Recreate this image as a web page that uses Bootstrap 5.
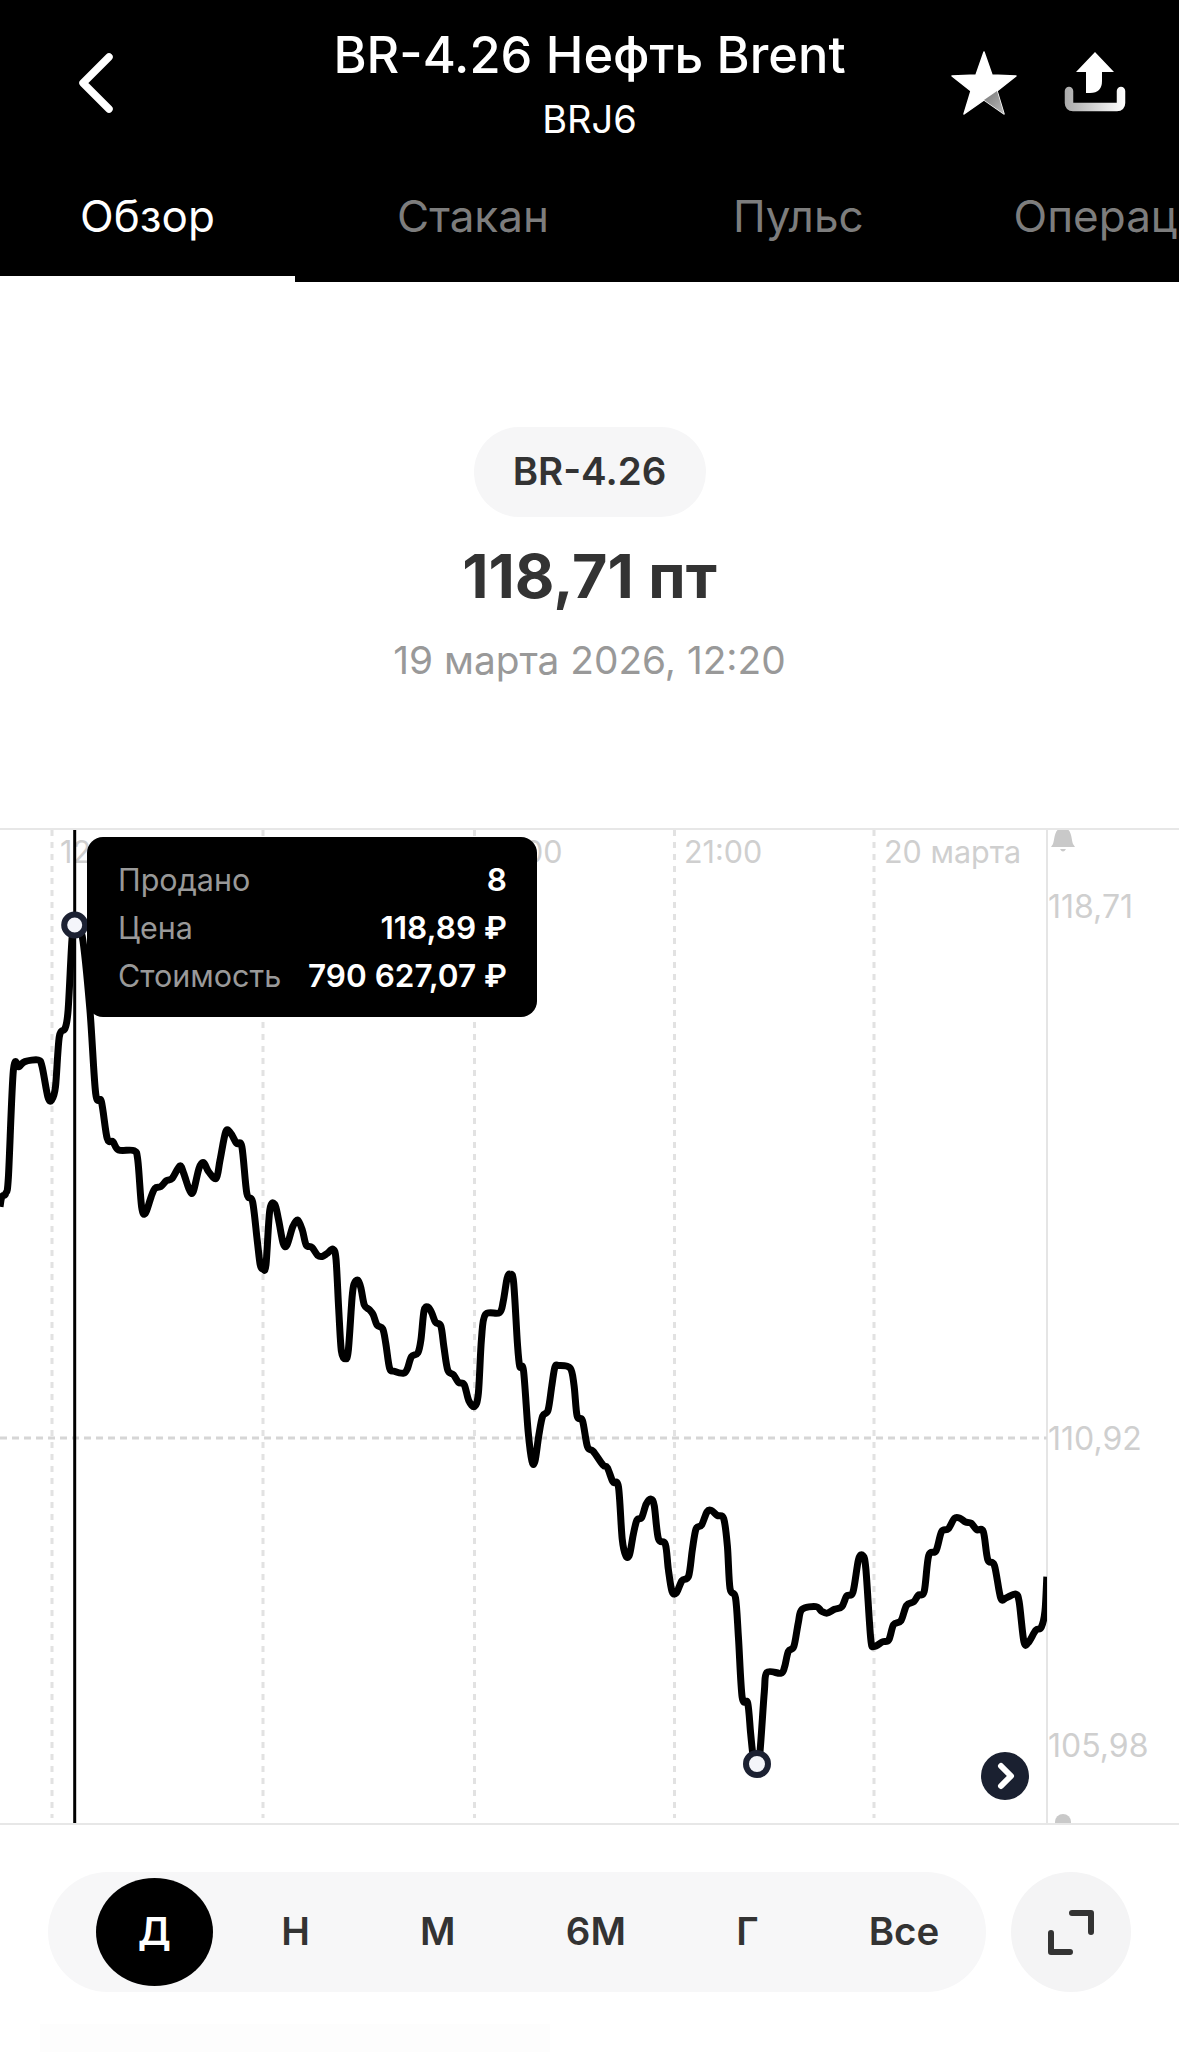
<!DOCTYPE html>
<html lang="ru">
<head>
    <meta charset="UTF-8">
    <meta name="viewport" content="width=device-width, initial-scale=1.0">
    <title>BR-4.26 Нефть Brent</title>
    <link href="https://cdn.jsdelivr.net/npm/bootstrap@5.3.0/dist/css/bootstrap.min.css" rel="stylesheet">
    <style>
        body { font-family: Inter, "Liberation Sans", sans-serif; background: #fff; width: 1179px; height: 2052px; overflow: hidden; }
        .top-head { background: #000; height: 282px; color: #fff; position: relative; overflow: hidden; }
        .head-row { height: 190px; padding-top: 26px; }
        .back-ico { position: absolute; left: 72px; top: 48px; }
        .star-ico { position: absolute; left: 945px; top: 45px; }
        .share-ico { position: absolute; left: 1060px; top: 45px; }
        .head-title { font-size: 50.5px; font-weight: 500; line-height: 58px; }
        .head-sub { font-size: 38px; line-height: 46px; margin-top: 12px; }
        .tabs-row { flex-wrap: nowrap; font-size: 44px; line-height: 52px; white-space: nowrap; height: 54px; }
        .tab-item { color: #7d7d7d; flex-shrink: 0; }
        .tab-item.active-tab { color: #fff; width: 295px; text-align: center; }
        .tab-two { margin-left: 102px; }
        .tab-three { margin-left: 184px; }
        .tab-four { margin-left: 150px; }
        .tab-bar { position: absolute; left: 0; bottom: 0; width: 295px; height: 6px; background: #fff; }
        .summary { height: 546px; padding-top: 145px; }
        .ticker-pill { background: #f6f6f7; color: #333; font-size: 38.5px; font-weight: 600; height: 90px; width: 232px; }
        .price-big { font-size: 61px; font-weight: 700; color: #333; line-height: 74px; margin-top: 22px; }
        .date-line { font-size: 38.8px; color: #999; line-height: 44px; margin-top: 25px; }
        .chart-box { height: 997px; border-top: 2px solid #e7e7e7; border-bottom: 2px solid #e7e7e7; position: relative; overflow: hidden; }
        .chart-box svg { position: absolute; left: 0; top: -2px; }
        .axis-txt { font-family: Inter, "Liberation Sans", sans-serif; font-size: 30.5px; fill: #cfcfcf; }
        .axis-val { font-size: 32px; }
        .deal-tip { position: absolute; left: 87px; top: 7px; width: 450px; height: 180px; background: #000; border-radius: 16px; padding: 19px 30px 0 31px; font-size: 30.5px; line-height: 48px; color: #999; }
        .deal-tip b { color: #fff; font-weight: 600; font-size: 31.5px; }
        .period-zone { padding: 47px 48px 0; gap: 25px; }
        .period-bar { background: #f7f7f8; height: 120px; width: 938px; padding-left: 48px; gap: 23.2px; }
        .period-btn { padding: 0 43.5px; height: 108px; font-size: 38.5px; font-weight: 600; color: #333; background: none; border: 0; white-space: nowrap; }
        .period-btn.picked { background: #000; color: #fff; border-radius: 50%; width: 117px; padding: 0; margin-right: 1.5px; }
        .expand-btn { width: 120px; height: 120px; background: #f4f4f5; border: 0; padding: 0; }
        .ghost-block { width: 510px; height: 28px; margin: 32px 0 0 40px; background: #fdfdfd; }
    </style>
</head>
<body>
    <div class="top-head">
        <svg class="back-ico" width="48" height="72" viewBox="0 0 48 72"><path d="M37 9 L11 35 L37 61" fill="none" stroke="#fff" stroke-width="7.5" stroke-linecap="round" stroke-linejoin="round"/></svg>
        <div class="head-row text-center">
            <div class="head-title">BR-4.26 Нефть Brent</div>
            <div class="head-sub">BRJ6</div>
        </div>
        <svg class="star-ico" width="80" height="76" viewBox="0 0 80 76">
            <defs><linearGradient id="starShade" x1="0" y1="0" x2="1" y2="1"><stop offset="0" stop-color="#777"/><stop offset="1" stop-color="#bbb"/></linearGradient></defs>
            <path d="M39 7 L47 30 L71 31 L52 46 L59 69 L39 55 L19 69 L26 46 L7 31 L31 30 Z" fill="#fff" stroke="#fff" stroke-width="1.5" stroke-linejoin="round"/>
            <path d="M39 55 L52 46 L59 69 Z" fill="url(#starShade)"/>
        </svg>
        <svg class="share-ico" width="84" height="76" viewBox="0 0 84 76">
            <defs><linearGradient id="trayShade" gradientUnits="userSpaceOnUse" x1="5" y1="0" x2="65" y2="0"><stop offset="0" stop-color="#aaa"/><stop offset="1" stop-color="#fff"/></linearGradient></defs>
            <path d="M35 7 L54 27 L42 27 L42 36 Q42 48 30 48 L26 48 L26 27 L16 27 Z" fill="#fff"/>
            <path d="M9 46 L9 58 Q9 62 13 62 L57 62 Q61 62 61 58 L61 46" fill="none" stroke="url(#trayShade)" stroke-width="8.5" stroke-linecap="round"/>
        </svg>
        <div class="nav tabs-row">
            <div class="tab-item active-tab">Обзор</div>
            <div class="tab-item tab-two">Стакан</div>
            <div class="tab-item tab-three">Пульс</div>
            <div class="tab-item tab-four">Операции</div>
        </div>
        <div class="tab-bar"></div>
    </div>

    <div class="summary d-flex flex-column align-items-center">
        <div class="ticker-pill rounded-pill d-flex align-items-center justify-content-center">BR-4.26</div>
        <div class="price-big">118,71 пт</div>
        <div class="date-line">19 марта 2026, 12:20</div>
    </div>

    <div class="chart-box">
        <svg id="chart" width="1179" height="997" viewBox="0 828 1179 997">
            <defs><clipPath id="plotClip"><rect x="0" y="828" width="1047" height="995"/></clipPath></defs>
            <g stroke="#e2e2e2" stroke-width="3" stroke-dasharray="6 6">
                <line x1="52" y1="830" x2="52" y2="1818"/>
                <line x1="263" y1="830" x2="263" y2="1818"/>
                <line x1="474.5" y1="830" x2="474.5" y2="1818"/>
                <line x1="674.5" y1="830" x2="674.5" y2="1818"/>
                <line x1="874" y1="830" x2="874" y2="1818"/>
            </g>
            <line x1="0" y1="1438" x2="1047" y2="1438" stroke="#d6d6d6" stroke-width="3" stroke-dasharray="7 5"/>
            <line x1="1047" y1="824" x2="1047" y2="1823" stroke="#dcdcdc" stroke-width="1.5"/>
            <text class="axis-txt" x="60" y="863">12:00</text>
            <text class="axis-txt" x="484" y="863">18:00</text>
            <text class="axis-txt" x="684" y="863">21:00</text>
            <text class="axis-txt" x="884" y="863">20 марта</text>
            <text class="axis-txt axis-val" x="1048" y="918">118,71</text>
            <text class="axis-txt axis-val" x="1048" y="1450">110,92</text>
            <text class="axis-txt axis-val" x="1048" y="1757">105,98</text>
            <path d="M1063 828 C1054 828 1055 838 1053 844 L1051 847 L1075 847 L1073 844 C1071 838 1072 828 1063 828 Z M1060 849 L1066 849 Q1063 854 1060 849 Z" fill="#c9c9c9"/>
            <circle cx="1063" cy="1822" r="8" fill="#c9c9c9"/>
            <line x1="74.7" y1="828" x2="74.7" y2="1823" stroke="#000" stroke-width="3"/>
            <path id="priceLine" clip-path="url(#plotClip)" fill="none" stroke="#000" stroke-width="7" stroke-linejoin="round"/>
            <circle cx="74.7" cy="925" r="10.5" fill="#f4f5fa" stroke="#1c2132" stroke-width="6"/>
            <circle cx="757" cy="1764" r="11" fill="#f4f5fa" stroke="#1c2132" stroke-width="6"/>
            <circle cx="1005" cy="1776" r="24" fill="#1a2030"/>
            <path d="M1001 1766 L1011 1776 L1001 1786" fill="none" stroke="#fff" stroke-width="6" stroke-linecap="round" stroke-linejoin="round"/>
        </svg>
        <div class="deal-tip">
            <div class="d-flex justify-content-between"><span>Продано</span><b>8</b></div>
            <div class="d-flex justify-content-between"><span>Цена</span><b>118,89 ₽</b></div>
            <div class="d-flex justify-content-between"><span>Стоимость</span><b>790 627,07 ₽</b></div>
        </div>
    </div>

    <div class="period-zone d-flex">
        <div class="period-bar rounded-pill d-flex align-items-center">
            <button class="btn period-btn picked">Д</button>
            <button class="btn period-btn">Н</button>
            <button class="btn period-btn">М</button>
            <button class="btn period-btn">6М</button>
            <button class="btn period-btn">Г</button>
            <button class="btn period-btn">Все</button>
        </div>
        <button class="btn expand-btn rounded-circle d-flex align-items-center justify-content-center">
            <svg width="48" height="48" viewBox="0 0 48 48"><path d="M25 5 L44 5 L44 24 M4 25 L4 44 L23 44" fill="none" stroke="#333" stroke-width="6" stroke-linecap="round" stroke-linejoin="round"/></svg>
        </button>
    </div>
    <div class="ghost-block"></div>

    <script>
        // точки сняты с графика, координаты в пикселях экрана
        const part1 = [[0,1190],[5,1160],[15,1150],[22,1100],[35,780],[50,770],[65,755],[100,750],[110,770],[125,860],[135,870],[145,830],[155,680],[170,655],[178,600],[188,390],[195,345],[215,380],[235,600],[250,850],[265,875],[280,985],[295,995],[310,1020],[350,1022],[360,1050],[370,1190],[380,1210],[395,1160],[405,1135],[420,1130],[435,1112],[450,1105],[470,1068],[480,1090],[495,1140],[505,1145],[520,1075],[532,1058],[545,1085],[565,1105],[575,1050],[590,965],[603,970],[618,1000],[632,1010],[645,1150],[660,1175],[672,1290]].map(p => [p[0] / 2.613, 810 + p[1] / 3]);
        const dip = [[680,65],[687,75],[695,65]].map(p => [p[0] / 2.613, 1240 + p[1] / 2.613]);
        const part2 = [[705,1200],[718,1183],[728,1230],[740,1300],[750,1305],[765,1250],[778,1230],[790,1260],[800,1305],[815,1312]].map(p => [p[0] / 2.613, 810 + p[1] / 3]);
        const part3 = [[830,40],[842,43],[855,35],[870,24],[878,50],[885,180],[892,290],[902,310],[910,290],[920,150],[925,115],[935,105],[943,125],[952,170],[965,182],[975,195],[985,222],[1000,232],[1008,270],[1018,335],[1030,343],[1055,348],[1065,335],[1075,305],[1092,295],[1100,260],[1108,185],[1118,175],[1128,190],[1138,215],[1152,225],[1160,280],[1170,340],[1185,352],[1198,372],[1213,378],[1225,420],[1240,435],[1250,400],[1258,260],[1268,195],[1305,190],[1315,160],[1325,100],[1333,90],[1342,110],[1352,270],[1358,330],[1368,342],[1380,500],[1390,578],[1398,578],[1408,510],[1418,460],[1432,445],[1442,380],[1450,332],[1460,328],[1490,335],[1500,380],[1508,460],[1522,472],[1535,540],[1550,552]].map(p => [p[0] / 2.613, 1240 + p[1] / 2.613]);
        const part4 = [[8,588],[20,595],[35,632],[50,645],[60,780],[70,825],[80,822],[90,770],[100,732],[113,725],[125,690],[138,677],[147,695],[158,780],[177,795],[185,860],[195,918],[207,922],[222,890],[240,878],[250,810],[260,755],[275,745],[290,710],[302,707],[318,720],[335,728],[345,800],[352,910],[367,935],[375,1040],[385,1195],[400,1210],[408,1290],[415,1350],[425,1370],[433,1340],[445,1180],[452,1130],[490,1132],[500,1115],[510,1075],[525,1062],[537,1000],[547,965],[585,958],[600,970],[615,975],[635,965],[655,958],[668,930],[685,920],[700,835],[712,825],[720,860],[733,1040],[742,1062],[765,1050],[782,1045],[795,1005],[815,995],[830,955],[850,945],[862,928],[878,918],[890,825],[910,812],[925,762],[943,755],[960,727],[975,727],[990,737],[1005,740],[1020,757],[1038,762],[1050,835],[1068,850],[1085,935],[1100,935],[1125,925],[1135,945],[1148,1050],[1160,1052],[1180,1020],[1195,1012],[1205,970],[1210,880]].map(p => [600 + p[0] / 2.708, 1240 + p[1] / 2.613]);
        const pts = [...part1, ...dip, ...part2, ...part3, ...part4];

        let d = `M${pts[0][0]} ${pts[0][1]}`;
        for (let i = 0; i < pts.length - 1; i++) {
            const a = pts[Math.max(i - 1, 0)], b = pts[i], c = pts[i + 1], e = pts[Math.min(i + 2, pts.length - 1)];
            const k = 0.16;
            d += ` C${b[0] + (c[0] - a[0]) * k} ${b[1] + (c[1] - a[1]) * k} ${c[0] - (e[0] - b[0]) * k} ${c[1] - (e[1] - b[1]) * k} ${c[0]} ${c[1]}`;
        }
        document.getElementById('priceLine').setAttribute('d', d);
    </script>
    <script src="https://cdn.jsdelivr.net/npm/bootstrap@5.3.0/dist/js/bootstrap.bundle.min.js"></script>
</body>
</html>
